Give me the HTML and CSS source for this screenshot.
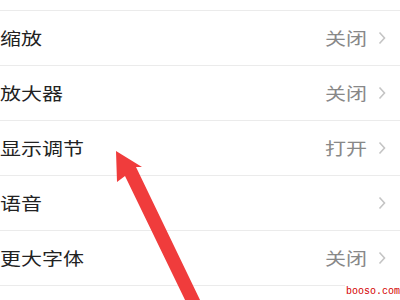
FILE: index.html
```html
<!DOCTYPE html>
<html lang="zh">
<head>
<meta charset="utf-8">
<link rel="stylesheet" href="styles.css">
</head>
<body>
<div class="screen">
  <ul class="list">
    <li class="row"><span class="label">缩放</span><span class="right"><span class="value">关闭</span><svg class="chev" width="8" height="14" viewBox="0 0 8 14"><polyline points="1.5,1.5 6.5,7 1.5,12.5"/></svg></span></li>
    <li class="row"><span class="label">放大器</span><span class="right"><span class="value">关闭</span><svg class="chev" width="8" height="14" viewBox="0 0 8 14"><polyline points="1.5,1.5 6.5,7 1.5,12.5"/></svg></span></li>
    <li class="row"><span class="label">显示调节</span><span class="right"><span class="value">打开</span><svg class="chev" width="8" height="14" viewBox="0 0 8 14"><polyline points="1.5,1.5 6.5,7 1.5,12.5"/></svg></span></li>
    <li class="row"><span class="label">语音</span><span class="right"><svg class="chev" width="8" height="14" viewBox="0 0 8 14"><polyline points="1.5,1.5 6.5,7 1.5,12.5"/></svg></span></li>
    <li class="row"><span class="label">更大字体</span><span class="right"><span class="value">关闭</span><svg class="chev" width="8" height="14" viewBox="0 0 8 14"><polyline points="1.5,1.5 6.5,7 1.5,12.5"/></svg></span></li>
  </ul>
  <svg class="arrow" width="400" height="300" viewBox="0 0 400 300">
    <polygon points="116,151 117,182 125,176 186,302 201,302 136,167 142,167"/>
  </svg>
  <div class="watermark">booso.com</div>
</div>
</body>
</html>
```
FILE: styles.css
```css
html, body {
  margin: 0;
  padding: 0;
  background: #ffffff;
}
.screen {
  position: relative;
  width: 400px;
  height: 300px;
  overflow: hidden;
  font-family: "Noto Sans CJK SC", "Noto Sans", sans-serif;
}
.list {
  list-style: none;
  margin: 0;
  padding: 10px 0 0 0;
}
.row {
  display: flex;
  align-items: center;
  justify-content: space-between;
  height: 54px;
  border-top: 1px solid #ebebeb;
  padding: 0 14px 0 0;
}
.row:last-child {
  border-bottom: 1px solid #ebebeb;
}
.label {
  font-size: 17.5px;
  color: #222222;
  transform: scaleX(1.2);
  transform-origin: left center;
  margin-top: -2px;
}
.right {
  display: flex;
  align-items: center;
  gap: 11px;
}
.value {
  font-size: 17.5px;
  color: #888888;
  transform: scaleX(1.2);
  transform-origin: right center;
  margin-top: -2px;
}
.chev {
  fill: none;
  stroke: #c4c4c4;
  stroke-width: 1.6;
}
.arrow {
  position: absolute;
  left: 0;
  top: 0;
}
.arrow polygon {
  fill: #f03c3c;
}
.watermark {
  position: absolute;
  right: 0;
  top: 285px;
  font-family: "Liberation Mono", monospace;
  font-size: 10px;
  line-height: 14px;
  color: #d40000;
  background: #ffffff;
  padding-left: 1px;
  white-space: nowrap;
}
```
